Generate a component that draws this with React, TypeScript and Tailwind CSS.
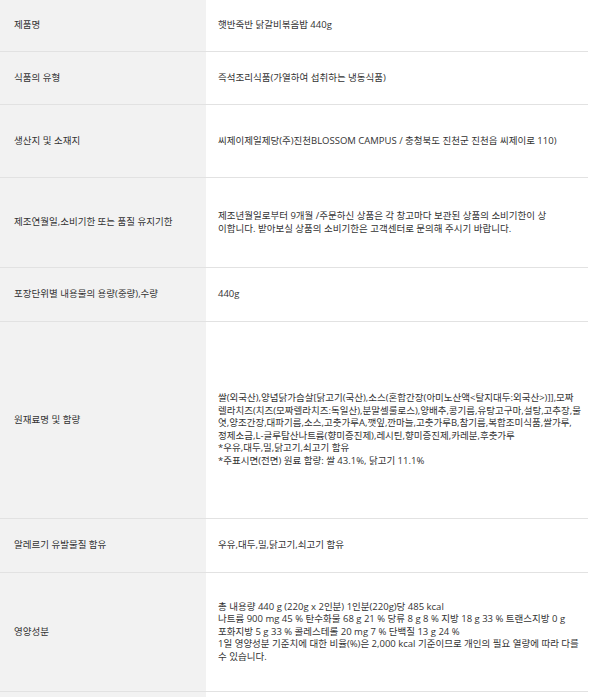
const rows: { label: string; lines: string[]; h: string; pad?: string }[] = [
  { label: '제품명', lines: ['햇반죽반 닭갈비볶음밥 440g'], h: 'h-[52px]' },
  { label: '식품의 유형', lines: ['즉석조리식품(가열하여 섭취하는 냉동식품)'], h: 'h-[53px]' },
  {
    label: '생산지 및 소재지',
    lines: ['씨제이제일제당(주)진천BLOSSOM CAMPUS / 충청북도 진천군 진천읍 씨제이로 110)'],
    h: 'h-[73px]',
  },
  {
    label: '제조연월일,소비기한 또는 품질 유지기한',
    lines: [
      '제조년월일로부터 9개월 /주문하신 상품은 각 창고마다 보관된 상품의 소비기한이 상',
      '이합니다. 받아보실 상품의 소비기한은 고객센터로 문의해 주시기 바랍니다.',
    ],
    h: 'h-[90px]',
  },
  { label: '포장단위별 내용물의 용량(중량),수량', lines: ['440g'], h: 'h-[54px]' },
  {
    label: '원재료명 및 함량',
    lines: [
      '쌀(외국산),양념닭가슴살[닭고기(국산),소스(혼합간장(아미노산액<탈지대두:외국산>)]],모짜',
      '렐라치즈(치즈(모짜렐라치즈:독일산),분말셀룰로스),양배추,콩기름,유탕고구마,설탕,고추장,물',
      '엿,양조간장,대파기름,소스,고춧가루A,깻잎,깐마늘,고춧가루B,참기름,복합조미식품,쌀가루,',
      '정제소금,L-글루탐산나트륨(향미증진제),레시틴,향미증진제,카레분,후춧가루',
      '*우유,대두,밀,닭고기,쇠고기 함유',
      '*주표시면(전면) 원료 함량: 쌀 43.1%, 닭고기 11.1%',
    ],
    h: 'h-[197px]',
    pad: 'pt-[19px]',
  },
  { label: '알레르기 유발물질 함유', lines: ['우유,대두,밀,닭고기,쇠고기 함유'], h: 'h-[54px]' },
  {
    label: '영양성분',
    lines: [
      '총 내용량 440 g (220g x 2인분) 1인분(220g)당 485 kcal',
      '나트륨 900 mg 45 % 탄수화물 68 g 21 % 당류 8 g 8 % 지방 18 g 33 % 트랜스지방 0 g',
      '포화지방 5 g 33 % 콜레스테롤 20 mg 7 % 단백질 13 g 24 %',
      '1일 영양성분 기준치에 대한 비율(%)은 2,000 kcal 기준이므로 개인의 필요 열량에 따라 다를',
      '수 있습니다.',
    ],
    h: 'h-[119px]',
  },
];

export default function App() {
  return (
    <div
      className="w-[608px] h-[697px] overflow-hidden bg-white text-[9.5px] leading-[12.5px] text-[#333]"
      style={{ fontFamily: '"Open Sans", "Noto Sans CJK KR", sans-serif' }}
    >
      <div className="w-[588px]">
        {rows.map((row) => (
          <div key={row.label} className={`flex border-b border-[#e2e2e2] ${row.h}`}>
            <div className="w-[206px] shrink-0 bg-[#f2f2f2] flex items-center pl-[14px] whitespace-nowrap">
              {row.label}
            </div>
            <div className={`flex-1 flex flex-col justify-center pl-[12px] ${row.pad ?? ''}`}>
              {row.lines.map((l, i) => (
                <div key={i} className="whitespace-nowrap">
                  {l}
                </div>
              ))}
            </div>
          </div>
        ))}
        {/* 다음 행 시작 부분 */}
        <div className="flex h-[20px]">
          <div className="w-[206px] shrink-0 bg-[#f2f2f2]" />
          <div className="flex-1" />
        </div>
      </div>
    </div>
  );
}
